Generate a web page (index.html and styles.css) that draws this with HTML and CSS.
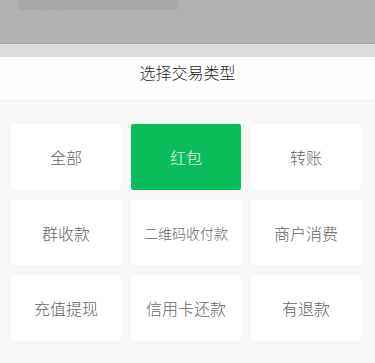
FILE: index.html
```html
<html>
    <head>
        <title>选择交易类型</title>
        <link rel="stylesheet" href="styles.css">
    </head>
    <body>
        <div class="backdrop">
            <div class="ghost-bar">
                <span class="ghost-seg"></span>
                <span class="ghost-seg"></span>
            </div>
        </div>
        <div class="sheet-edge"></div>
        <div class="sheet">
            <div class="sheet-title">选择交易类型</div>
            <div class="type-grid">
                <div class="type-item">全部</div>
                <div class="type-item active">红包</div>
                <div class="type-item">转账</div>
                <div class="type-item">群收款</div>
                <div class="type-item small">二维码收付款</div>
                <div class="type-item">商户消费</div>
                <div class="type-item">充值提现</div>
                <div class="type-item">信用卡还款</div>
                <div class="type-item">有退款</div>
            </div>
        </div>
    </body>
</html>
```

FILE: styles.css
```css
body {
    margin: 0;
    width: 375px;
    height: 363px;
    overflow: hidden;
    background-color: rgb(248, 248, 248);
    font-family: "Noto Sans CJK SC", "Noto Sans", sans-serif;
}
.backdrop {
    height: 43px;
    background-color: rgb(177, 177, 177);
    border-bottom: 1px solid rgb(168, 168, 168);
}
.ghost-bar {
    display: flex;
    width: 160px;
    height: 10px;
    margin-left: 18px;
    background-color: rgb(168, 168, 168);
    border-radius: 0 0 2px 2px;
}
.ghost-seg {
    width: 22px;
    border-right: 1px solid rgb(172, 172, 172);
}
.sheet-edge {
    height: 13px;
    background-color: rgb(220, 220, 220);
}
.sheet-title {
    height: 43px;
    line-height: 30px;
    text-align: center;
    font-size: 16px;
    font-weight: 300;
    color: rgb(30, 30, 30);
    background-color: rgb(253, 253, 253);
    border-bottom: 1px solid rgb(240, 240, 240);
}
.type-grid {
    display: grid;
    grid-template-columns: repeat(3, 110px);
    grid-template-rows: 66px 65px 66px;
    column-gap: 10px;
    row-gap: 10px;
    padding: 23px 0 0 11px;
}
.type-item {
    display: flex;
    align-items: center;
    justify-content: center;
    background-color: rgb(255, 255, 255);
    border-radius: 2px;
    font-size: 16px;
    font-weight: 300;
    color: rgb(100, 100, 100);
}
.type-item.small {
    font-size: 14px;
}
.type-item.active {
    background-color: rgb(9, 189, 91);
    color: rgb(235, 255, 240);
}
```
